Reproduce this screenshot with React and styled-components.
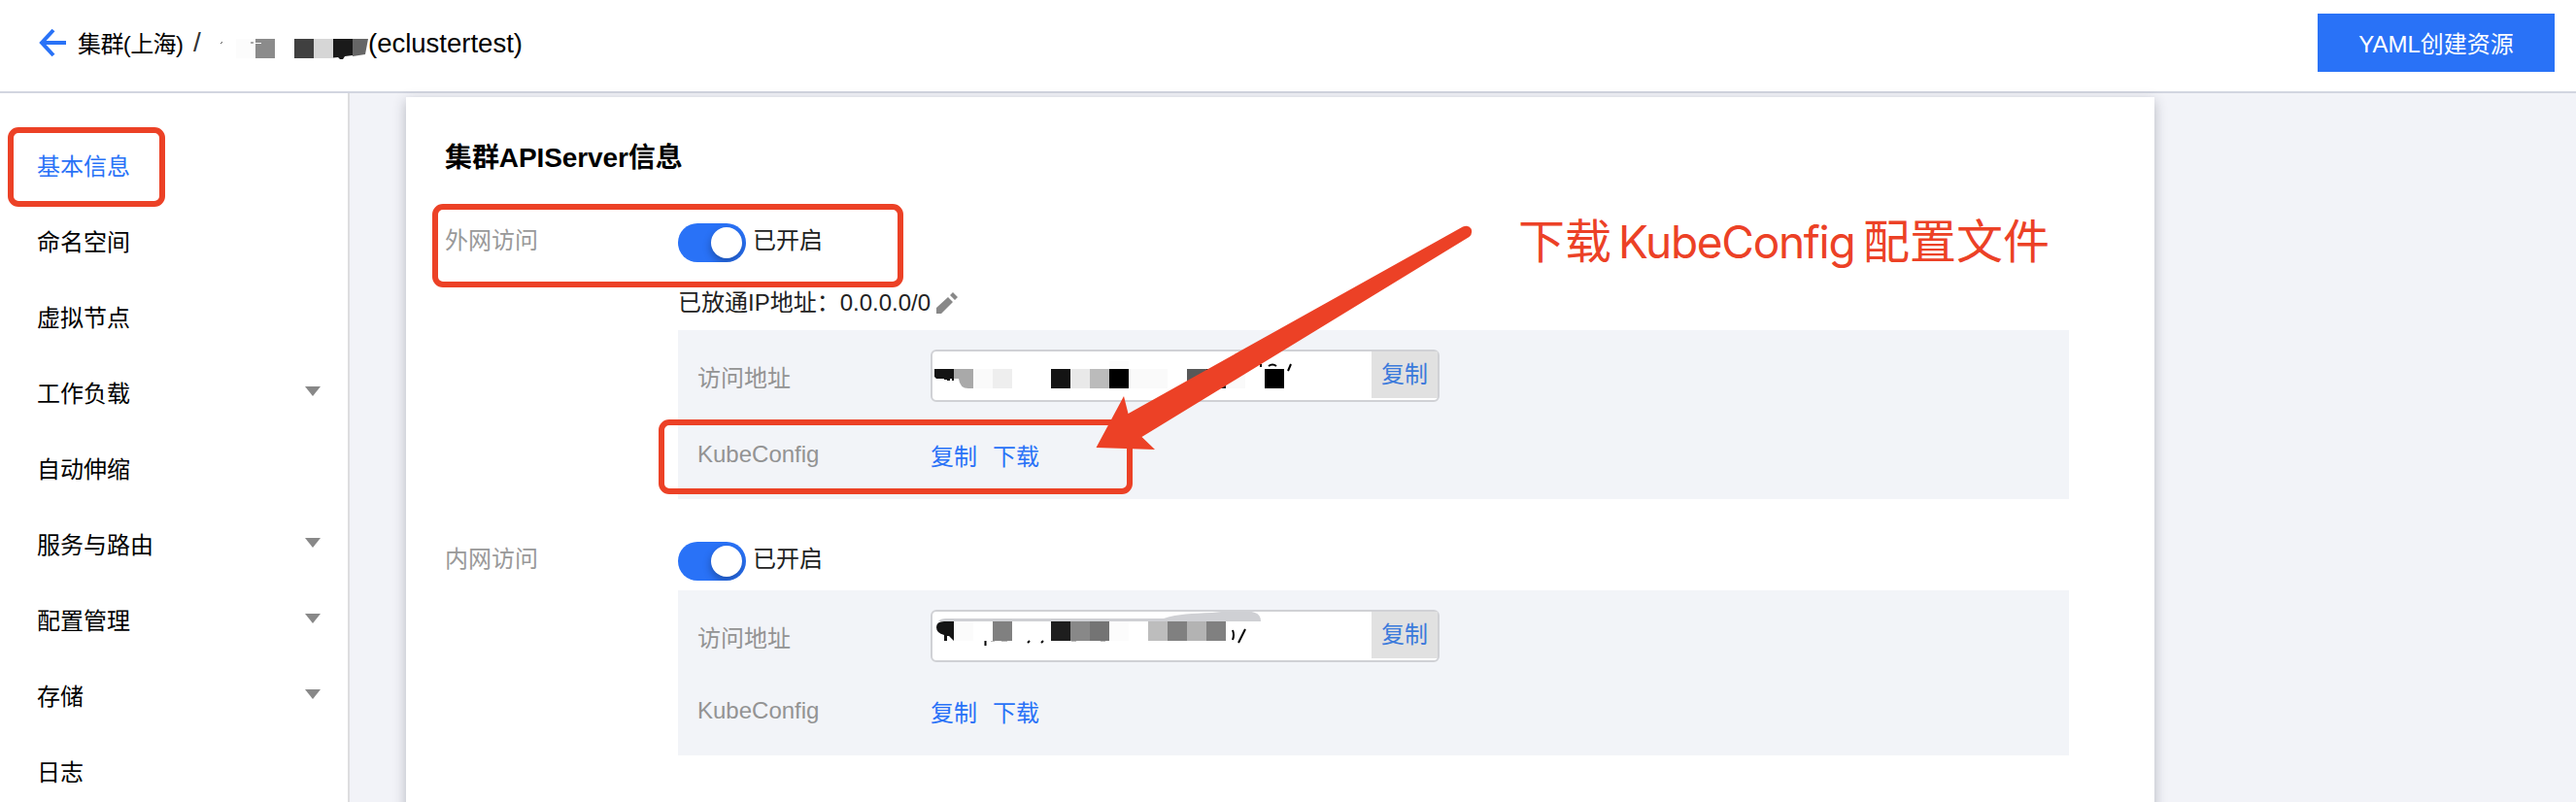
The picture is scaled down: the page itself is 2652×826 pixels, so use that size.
import React from 'react';
import styled, { createGlobalStyle } from 'styled-components';

const Global = createGlobalStyle`
  * { box-sizing: border-box; }
  body { margin: 0; overflow: hidden; background: #fff; }
`;

const RED = '#ec4126';
const BLUE = '#2972f7';

const Page = styled.div`
  position: relative;
  width: 2652px;
  height: 826px;
  overflow: hidden;
  display: flex;
  flex-direction: column;
  font: 24px/36px "Liberation Sans", "Noto Sans CJK SC", sans-serif;
  color: #000;
`;
const Header = styled.header`
  flex: none;
  height: 96px;
  border-bottom: 2px solid #d2d5e0;
  background: #fff;
  display: flex;
  align-items: flex-start;
  justify-content: space-between;
  padding: 14px 22px 0 40px;
`;
const Crumbs = styled.div`
  display: flex;
  align-items: flex-start;
  padding-top: 12px;
  white-space: pre;
`;
const BackIcon = styled.svg`
  width: 29px;
  height: 30px;
  margin: 3px 11px 0 0;
`;
const Region = styled.span`
  width: 108px;
  padding-top: 2px;
  letter-spacing: -0.6px;
`;
const Slash = styled.span`
  width: 10px;
  margin-left: 11px;
  font-size: 28px;
  color: #333;
`;
const Redacted = styled.svg`
  display: block;
  flex: none;
`;
const ClusterName = styled.span`
  padding-top: 1px;
  font-size: 27.5px;
`;
const CreateButton = styled.button`
  width: 244px;
  height: 60px;
  border: 0;
  padding: 3px 0 0;
  background: ${BLUE};
  color: #fff;
  font: inherit;
`;
const Body = styled.div`
  flex: 1;
  min-height: 0;
  display: flex;
`;
const Sidebar = styled.nav`
  flex: none;
  width: 360px;
  border-right: 2px solid #dddddf;
  background: #fff;
  padding-top: 37px;
`;
const NavItem = styled.div`
  height: 78px;
  padding: 0 28px 0 38px;
  display: flex;
  align-items: center;
  justify-content: space-between;
  color: ${(p) => (p.$active ? BLUE : '#000')};
`;
const Caret = styled.span`
  border: 8px solid transparent;
  border-top: 10px solid #888;
  border-bottom: 0;
  margin-bottom: 6px;
`;
const Main = styled.main`
  flex: 1;
  background: #f2f3f8;
  padding: 4px 0 0 58px;
`;
const Card = styled.section`
  width: 1800px;
  height: 760px;
  background: #fff;
  box-shadow: 0 4px 12px rgba(40, 44, 60, 0.3);
  padding: 41px 0 0 40px;
`;
const Title = styled.h2`
  margin: 0;
  font-size: 28px;
  line-height: 44px;
  font-weight: 700;
  letter-spacing: -0.1px;
`;
const Access = styled.div`
  display: flex;
  margin-top: ${(p) => p.$gap}px;
`;
const AccessLabel = styled.div`
  width: 240px;
  color: #999;
`;
const AccessBody = styled.div`
  width: 1432px;
`;
const SwitchRow = styled.div`
  display: flex;
  height: 40px;
  gap: 7px;
  color: #222;
`;
const Switch = styled.span`
  width: 70px;
  height: 40px;
  border-radius: 20px;
  background: ${BLUE};
  padding: 4px;
  display: flex;
  justify-content: flex-end;
  overflow: hidden;
`;
const Knob = styled.span`
  width: 32px;
  height: 32px;
  border-radius: 50%;
  background: #fff;
  box-shadow: 0 4px 8px rgba(0, 0, 0, 0.3);
`;
const AllowRow = styled.div`
  display: flex;
  align-items: center;
  gap: 6px;
  height: 40px;
  margin-top: 22px;
  color: #222;
`;
const Panel = styled.div`
  margin-top: ${(p) => p.$top}px;
  height: ${(p) => p.$height}px;
  background: #f2f4f8;
  padding: 20px;
`;
const Field = styled.div`
  display: flex;
  height: ${(p) => p.$height}px;
`;
const FieldLabel = styled.span`
  width: 240px;
  padding-top: ${(p) => p.$top}px;
  color: #939393;
`;
const Address = styled.div`
  width: 524px;
  height: 54px;
  border: 2px solid #d0d1d5;
  border-radius: 6px;
  background: #fff;
  display: flex;
  justify-content: space-between;
`;
const CopyButton = styled.button`
  width: 68px;
  height: 48px;
  padding: 0;
  border: 0;
  background: #e1e1e1;
  color: #3b7adb;
  font: inherit;
`;
const Links = styled.div`
  display: flex;
  gap: 16px;
  padding-top: ${(p) => p.$top}px;
  color: ${BLUE};
`;
const Highlight = styled.div`
  position: absolute;
  left: ${(p) => p.$x}px;
  top: ${(p) => p.$y}px;
  width: ${(p) => p.$w}px;
  height: ${(p) => p.$h}px;
  border: 6px solid ${RED};
  border-radius: 11px;
`;
const Arrow = styled.svg`
  position: absolute;
  left: 1120px;
  top: 220px;
`;
const Note = styled.div`
  position: absolute;
  left: 1563px;
  top: 214px;
  font: 48px/70px Inter, "Noto Sans CJK SC", sans-serif;
  color: ${RED};
  white-space: nowrap;
  display: flex;
  gap: 7px;
`;
const NoteLatin = styled.span`
  width: 245px;
  font-size: 46px;
  letter-spacing: -1.3px;
`;

const nav = [
  ['基本信息', false, true],
  ['命名空间'],
  ['虚拟节点'],
  ['工作负载', true],
  ['自动伸缩'],
  ['服务与路由', true],
  ['配置管理', true],
  ['存储', true],
  ['日志'],
];

const Blocks = ({ items, y, h = 20 }) =>
  items.map(([x, fill]) => <rect key={x} x={x} y={y} width="20" height={h} fill={fill} />);

const NameMask = () => (
  <Redacted width="170" height="36">
    <Blocks y={14} items={[[34, '#fcfcfc'], [54, '#8b8b8b'], [94, '#404040'], [114, '#d6d6d6']]} />
    <path d="M134 14h20v17l-8 1-2 3h-3l-2-2-5 .5z" fill="#1a1a1a" />
    <path d="M154 14h16l-3 16-13 2z" fill="#666" />
    <path d="M18 19l2-2M49 18h3" stroke="#555" strokeWidth="1" />
    <path d="M52 18.500h8" stroke="#fff" strokeWidth="1" />
  </Redacted>
);

const PublicMask = () => (
  <Redacted width="440" height="50">
    <path d="M2 18h20v12h-2v-2h-2v2h-3v-1h-3v-1H4l-2-2z" fill="#141414" />
    <path d="M22 18h20v20h-5q-9 0-10-10h-5z" fill="#a9a9a9" />
    <Blocks y={18} items={[[42, '#fafafa'], [62, '#eee'], [122, '#141414'], [142, '#e9e9e9'], [162, '#bbb'], [182, '#000'], [202, '#fafafa'], [222, '#fafafa'], [262, '#585858'], [282, '#222'], [302, '#fafafa'], [342, '#000']]} />
    <rect x="182" y="10" width="20" height="8" fill="#fcfcfc" />
    <path d="M338 13v3M346 15q4-3 8 0M366 20l3-7" fill="none" stroke="#000" strokeWidth="2" />
  </Redacted>
);

const PrivateMask = () => (
  <Redacted width="440" height="50">
    <path d="M6 10q2-3 8-3h224c16-5 28-5 50-6q34-4 44 0q6 2 6 9z" fill="#cfd0d4" />
    <path d="M22 10v20l-5-5h-2v5h-3v-6q-8-2-8-8q0-6 8-6z" fill="#141414" />
    <Blocks y={10} items={[[22, '#fbfbfb'], [62, '#808080'], [122, '#1e1e1e'], [142, '#888'], [162, '#747474'], [182, '#fcfcfc'], [222, '#bdbdbd'], [242, '#808080'], [262, '#b3b3b3'], [282, '#808080']]} />
    <path d="M54.500 30v5M98 32l2-2M112 32l2-2M309 19q2 5 0 10M315 32l7-14" fill="none" stroke="#000" strokeWidth="2" />
    <path d="M60 30.500h4M71 30.500h6M143 30.500h5M173 30.500h5" stroke="#bbb" strokeWidth="1" />
  </Redacted>
);

const Toggle = () => (
  <SwitchRow>
    <Switch><Knob /></Switch>
    已开启
  </SwitchRow>
);

export default function App() {
  return (
    <Page>
      <Global />
      <Header>
        <Crumbs>
          <BackIcon viewBox="0 0 29 30" fill="none" stroke={BLUE} strokeWidth="4">
            <path d="M28 15H3M15 2L3 15l12 13" />
          </BackIcon>
          <Region>集群(上海)</Region>
          <Slash>/</Slash>
          <NameMask />
          <ClusterName>(eclustertest)</ClusterName>
        </Crumbs>
        <CreateButton>YAML创建资源</CreateButton>
      </Header>
      <Body>
        <Sidebar>
          {nav.map(([label, caret, active]) => (
            <NavItem key={label} $active={active}>{label}{caret && <Caret />}</NavItem>
          ))}
        </Sidebar>
        <Main>
          <Card>
            <Title>集群APIServer信息</Title>
            <Access $gap={45}>
              <AccessLabel>外网访问</AccessLabel>
              <AccessBody>
                <Toggle />
                <AllowRow>
                  已放通IP地址：0.0.0.0/0
                  <svg width="22" height="22" viewBox="0 0 22 22" fill="#888">
                    <path d="M0 22v-6L12 5l5 5L5 22zM14 3l3-3 5 5-3 3z" />
                  </svg>
                </AllowRow>
                <Panel $top={8} $height={174}>
                  <Field $height={79}>
                    <FieldLabel $top={12}>访问地址</FieldLabel>
                    <Address><PublicMask /><CopyButton>复制</CopyButton></Address>
                  </Field>
                  <Field $height={50}>
                    <FieldLabel $top={11}>KubeConfig</FieldLabel>
                    <Links $top={14}><span>复制</span><span>下载</span></Links>
                  </Field>
                </Panel>
              </AccessBody>
            </Access>
            <Access $gap={44}>
              <AccessLabel>内网访问</AccessLabel>
              <AccessBody>
                <Toggle />
                <Panel $top={10} $height={170}>
                  <Field $height={75}>
                    <FieldLabel $top={12}>访问地址</FieldLabel>
                    <Address><PrivateMask /><CopyButton>复制</CopyButton></Address>
                  </Field>
                  <Field $height={50}>
                    <FieldLabel $top={11}>KubeConfig</FieldLabel>
                    <Links $top={14}><span>复制</span><span>下载</span></Links>
                  </Field>
                </Panel>
              </AccessBody>
            </Access>
          </Card>
        </Main>
      </Body>
      <Highlight $x={8} $y={131} $w={162} $h={82} />
      <Highlight $x={445} $y={210} $w={485} $h={86} />
      <Highlight $x={678} $y={432} $w={488} $h={77} />
      <Arrow width="410" height="260" viewBox="1120 220 410 260">
        <path d="M1128.500 461L1157 408l4.500 18L1506 233.500q6-2 8.500 2q2 5-2 8.500L1175.500 450l13.500 13z" fill={RED} />
      </Arrow>
      <Note><span>下载</span><NoteLatin>KubeConfig</NoteLatin><span>配置文件</span></Note>
    </Page>
  );
}
